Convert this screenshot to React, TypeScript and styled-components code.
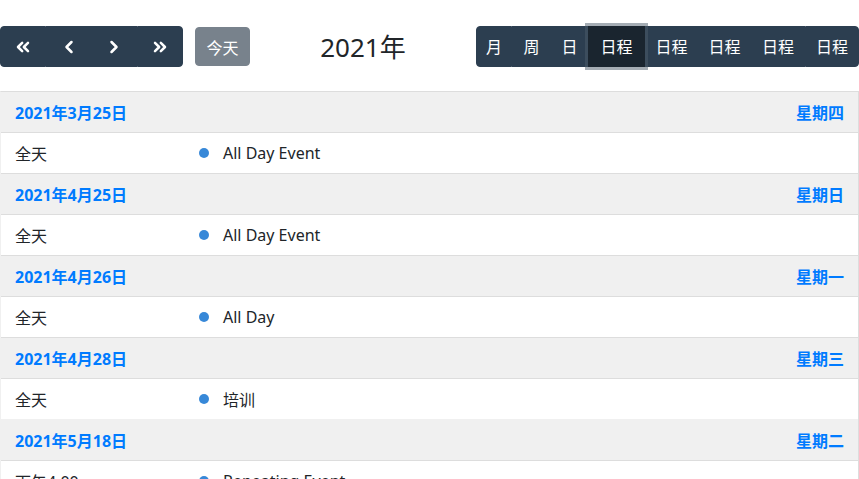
import React from 'react';
import styled, { createGlobalStyle } from 'styled-components';
import { ChevronLeft, ChevronRight, ChevronsLeft, ChevronsRight } from 'lucide-react';

const GlobalStyle = createGlobalStyle`
  html, body {
    margin: 0;
    padding: 0;
    background: #fff;
  }
  body {
    font-family: "Noto Sans", "Noto Sans CJK SC", sans-serif;
    color: #212529;
    overflow: hidden;
  }
`;

const Calendar = styled.div`
  width: 859px;
  padding-top: 26px;
  box-sizing: border-box;
`;

const Toolbar = styled.div`
  display: flex;
  justify-content: space-between;
  align-items: center;
  margin-bottom: 24px;
`;

const Chunk = styled.div`
  display: flex;
  align-items: center;
`;

const ButtonGroup = styled.div`
  display: flex;
  border-radius: 4px;
  & > button {
    border-radius: 0;
  }
  & > button:first-child {
    border-top-left-radius: 4px;
    border-bottom-left-radius: 4px;
  }
  & > button:last-child {
    border-top-right-radius: 4px;
    border-bottom-right-radius: 4px;
  }
`;

const Button = styled.button<{ $w: number; $active?: boolean }>`
  width: ${p => p.$w}px;
  height: 41px;
  display: flex;
  align-items: center;
  justify-content: center;
  padding: 0;
  border: 1px solid ${p => (p.$active ? '#1a252f' : '#2c3e50')};
  background: ${p => (p.$active ? '#1a252f' : '#2c3e50')};
  color: #fff;
  font-family: "Noto Sans", "Noto Sans CJK SC", sans-serif;
  font-size: 16px;
  line-height: 24px;
  cursor: pointer;
  position: relative;
  z-index: ${p => (p.$active ? 2 : 1)};
  box-shadow: ${p => (p.$active ? '0 0 0 3px rgba(76, 91, 106, 0.5)' : 'none')};
`;

const TodayButton = styled.button`
  margin-left: 12px;
  width: 55px;
  height: 39px;
  border: 1px solid #78828c;
  border-radius: 4px;
  background: #78828c;
  color: #fff;
  font-family: "Noto Sans", "Noto Sans CJK SC", sans-serif;
  font-size: 16px;
  padding: 0;
`;

const Title = styled.h2`
  margin: 0;
  font-size: 26px;
  font-weight: 400;
  line-height: 36px;
  color: #212529;
`;

const List = styled.div`
  border: 1px solid #ddd;
  border-left-color: #f0f0f0;
  border-bottom: none;
`;

const DayHeader = styled.div`
  display: flex;
  justify-content: space-between;
  align-items: center;
  height: 41px;
  box-sizing: border-box;
  padding: 0 14px;
  background: #f0f0f0;
  border-bottom: 1px solid #ddd;
  color: #007bff;
  font-weight: 700;
  font-size: 16px;
`;

const EventRow = styled.div<{ $seamless?: boolean }>`
  display: grid;
  grid-template-columns: 184px 38px 1fr;
  align-items: center;
  height: 41px;
  box-sizing: border-box;
  background: #fff;
  border-bottom: 1px solid ${p => (p.$seamless ? '#f0f0f0' : '#ddd')};
  font-size: 16px;
  color: #212529;
`;

const Time = styled.div`
  padding-left: 14px;
`;

const Dot = styled.span<{ $color: string }>`
  display: block;
  margin-left: 14px;
  width: 10px;
  height: 10px;
  border-radius: 5px;
  background: ${p => p.$color};
`;

const EventTitle = styled.div``;

type Day = {
  date: string;
  weekday: string;
  events: { time: string; title: string }[];
};

const days: Day[] = [
  { date: '2021年3月25日', weekday: '星期四', events: [{ time: '全天', title: 'All Day Event' }] },
  { date: '2021年4月25日', weekday: '星期日', events: [{ time: '全天', title: 'All Day Event' }] },
  { date: '2021年4月26日', weekday: '星期一', events: [{ time: '全天', title: 'All Day' }] },
  { date: '2021年4月28日', weekday: '星期三', events: [{ time: '全天', title: '培训' }] },
  { date: '2021年5月18日', weekday: '星期二', events: [{ time: '下午4:00', title: 'Repeating Event' }] }
];

const views = [
  { label: '月', w: 36 },
  { label: '周', w: 39 },
  { label: '日', w: 37 },
  { label: '日程', w: 57, active: true },
  { label: '日程', w: 53 },
  { label: '日程', w: 53 },
  { label: '日程', w: 54 },
  { label: '日程', w: 54 }
];

const App: React.FC = () => {
  return (
    <Calendar>
      <GlobalStyle />
      <Toolbar>
        <Chunk>
          <ButtonGroup>
            <Button $w={46}>
              <ChevronsLeft size={20} strokeWidth={3} />
            </Button>
            <Button $w={45}>
              <ChevronLeft size={20} strokeWidth={3} />
            </Button>
            <Button $w={46}>
              <ChevronRight size={20} strokeWidth={3} />
            </Button>
            <Button $w={46}>
              <ChevronsRight size={20} strokeWidth={3} />
            </Button>
          </ButtonGroup>
          <TodayButton>今天</TodayButton>
        </Chunk>
        <Title>2021年</Title>
        <Chunk>
          <ButtonGroup>
            {views.map((v, i) => (
              <Button key={i} $w={v.w} $active={v.active}>
                {v.label}
              </Button>
            ))}
          </ButtonGroup>
        </Chunk>
      </Toolbar>
      <List>
        {days.map((day, i) => (
          <React.Fragment key={day.date}>
            <DayHeader>
              <span>{day.date}</span>
              <span>{day.weekday}</span>
            </DayHeader>
            {day.events.map((ev, j) => (
              <EventRow key={j} $seamless={i === 3}>
                <Time>{ev.time}</Time>
                <Dot $color="#3788d8" />
                <EventTitle>{ev.title}</EventTitle>
              </EventRow>
            ))}
          </React.Fragment>
        ))}
      </List>
    </Calendar>
  );
};

export default App;
